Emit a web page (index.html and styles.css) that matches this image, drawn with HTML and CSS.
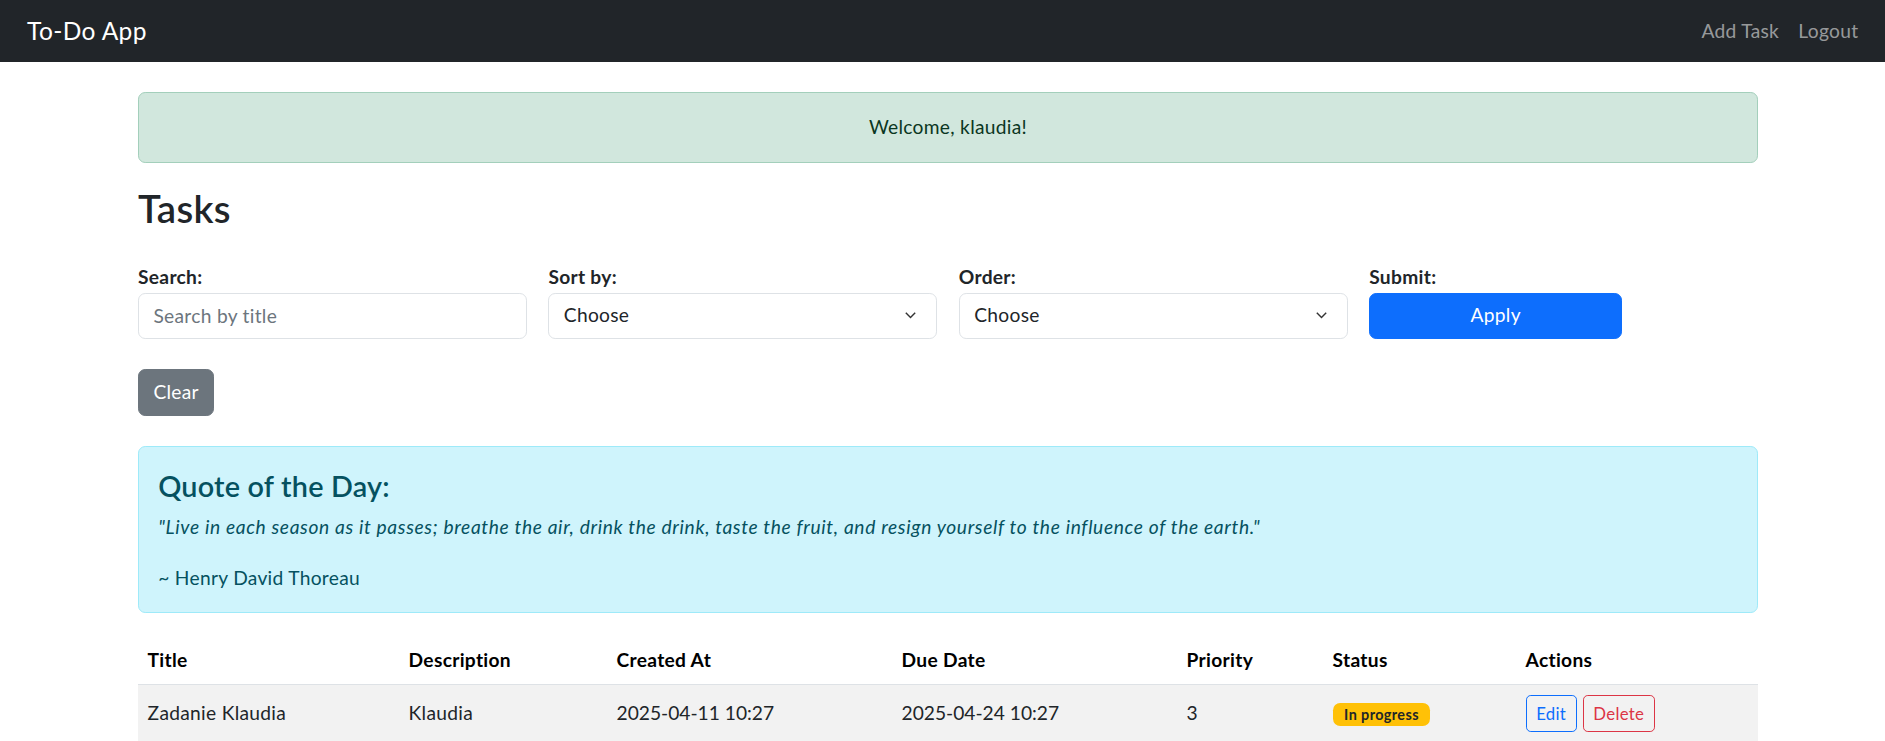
FILE: index.html
```html
<!DOCTYPE html>
<html lang="en">
<head>
<meta charset="utf-8">
<title>To-Do App</title>
<link rel="stylesheet" href="styles.css">
</head>
<body>
<nav class="navbar">
  <a class="brand" href="#">To-Do App</a>
  <div class="nav-links">
    <a class="nav-link" href="#">Add Task</a>
    <a class="nav-link" href="#">Logout</a>
  </div>
</nav>

<main class="container">
  <div class="alert-success">Welcome, klaudia!</div>

  <h2 class="page-title">Tasks</h2>

  <form class="filters">
    <div class="field">
      <label class="label" for="search">Search:</label>
      <input class="control" id="search" type="text" placeholder="Search by title">
    </div>
    <div class="field">
      <label class="label" for="sort">Sort by:</label>
      <div class="select" id="sort"><span>Choose</span><svg class="chev" viewBox="0 0 11 7" width="11" height="7"><path d="M0.8 0.8 5.5 5.6 10.2 0.8" fill="none" stroke="#333" stroke-width="1.4"/></svg></div>
    </div>
    <div class="field">
      <label class="label" for="order">Order:</label>
      <div class="select" id="order"><span>Choose</span><svg class="chev" viewBox="0 0 11 7" width="11" height="7"><path d="M0.8 0.8 5.5 5.6 10.2 0.8" fill="none" stroke="#333" stroke-width="1.4"/></svg></div>
    </div>
    <div class="field">
      <span class="label">Submit:</span>
      <button class="btn-apply" type="button">Apply</button>
    </div>
  </form>

  <button class="btn-clear" type="button">Clear</button>

  <div class="alert-info">
    <h4 class="quote-title">Quote of the Day:</h4>
    <p class="quote-text">"Live in each season as it passes; breathe the air, drink the drink, taste the fruit, and resign yourself to the influence of the earth."</p>
    <p class="quote-author">~ Henry David Thoreau</p>
  </div>

  <table class="tasks">
    <colgroup>
      <col class="c-title"><col class="c-desc"><col class="c-created"><col class="c-due"><col class="c-prio"><col class="c-status"><col class="c-actions">
    </colgroup>
    <thead>
      <tr><th>Title</th><th>Description</th><th>Created At</th><th>Due Date</th><th>Priority</th><th>Status</th><th>Actions</th></tr>
    </thead>
    <tbody>
      <tr>
        <td>Zadanie Klaudia</td>
        <td>Klaudia</td>
        <td class="num">2025-04-11 10:27</td>
        <td class="num">2025-04-24 10:27</td>
        <td class="num">3</td>
        <td><span class="badge">In progress</span></td>
        <td><button class="btn-sm btn-edit" type="button">Edit</button><button class="btn-sm btn-delete" type="button">Delete</button></td>
      </tr>
      <tr>
        <td>&nbsp;</td><td></td><td></td><td></td><td></td><td></td><td></td>
      </tr>
    </tbody>
  </table>
</main>
</body>
</html>
```

FILE: styles.css
```css
* { box-sizing: border-box; }

html, body { margin: 0; padding: 0; }

body {
  font-family: Lato, "Open Sans", sans-serif;
  font-size: 19.2px;
  line-height: 1.5;
  letter-spacing: 0.3px;
  color: #212529;
  background: #fff;
  overflow: hidden;
}

a { text-decoration: none; }

.navbar {
  height: 62px;
  background: #212529;
  display: flex;
  align-items: center;
  justify-content: space-between;
  padding: 0 17px 0 27px;
}

.brand {
  color: #fff;
  font-size: 24.5px;
  line-height: 1.5;
  letter-spacing: 0.4px;
}

.nav-links { display: flex; }

.nav-link {
  color: rgba(255, 255, 255, 0.55);
  padding: 0 9.6px;
}

.container {
  width: 1620px;
  margin: 0 127px 0 138px;
  padding-top: 30px;
}

.alert-success {
  background: #d1e7dd;
  border: 1px solid #a3cfbb;
  color: #0a3622;
  border-radius: 7.2px;
  padding: 20px;
  text-align: center;
  height: 71px;
  line-height: 28.8px;
}

.page-title {
  font-size: 38.4px;
  font-weight: 600;
  line-height: 1.2;
  letter-spacing: 0.3px;
  margin: 22px 0 32px;
}

.filters {
  display: grid;
  grid-template-columns: repeat(4, 1fr);
  column-gap: 21.6px;
}

.field { display: flex; flex-direction: column; }

.label {
  font-weight: 700;
  line-height: 28.8px;
  height: 29.5px;
}

.control, .select {
  height: 46px;
  border: 1px solid #dee2e6;
  border-radius: 7.2px;
  padding: 0 14.4px;
  font: inherit;
  letter-spacing: inherit;
  color: #212529;
  background: #fff;
}

.control::placeholder { color: #6c757d; opacity: 1; }

.select {
  display: flex;
  align-items: center;
  justify-content: space-between;
  padding-right: 20px;
}

.chev { display: block; }

.btn-apply {
  width: 253px;
  height: 46px;
  background: #0d6efd;
  border: 1px solid #0d6efd;
  border-radius: 7.2px;
  color: #fff;
  font: inherit;
  letter-spacing: inherit;
  padding: 0;
}

.btn-clear {
  display: block;
  margin-top: 30.5px;
  height: 47px;
  padding: 0 14.4px;
  background: #6c757d;
  border: 1px solid #6c757d;
  border-radius: 7.2px;
  color: #fff;
  font: inherit;
  letter-spacing: inherit;
}

.alert-info {
  margin-top: 30px;
  background: #cff4fc;
  border: 1px solid #9eeaf9;
  color: #055160;
  border-radius: 7.2px;
  padding: 21.6px 19.2px 19.6px;
  height: 167px;
}

.quote-title {
  margin: 0 0 10px;
  font-size: 28.8px;
  font-weight: 600;
  line-height: 1.2;
  letter-spacing: 0.2px;
}

.quote-text {
  margin: 0 0 22px;
  font-style: italic;
  line-height: 28.8px;
  letter-spacing: 0.65px;
}

.quote-author {
  margin: 0;
  line-height: 28.8px;
}

.tasks {
  margin-top: 23px;
  width: 100%;
  border-collapse: collapse;
  table-layout: fixed;
}

.c-title { width: 261px; }
.c-desc { width: 208px; }
.c-created { width: 285px; }
.c-due { width: 285px; }
.c-prio { width: 146px; }
.c-status { width: 193px; }
.c-actions { width: 242px; }

.tasks th, .tasks td {
  text-align: left;
  padding: 9.6px;
  border-bottom: 1px solid #dee2e6;
  line-height: 28.8px;
  vertical-align: middle;
}

.tasks th { font-weight: 700; color: #000; }

.tasks td.num { letter-spacing: 0; }

.tasks tbody tr:nth-child(odd) td { background: #f2f2f2; }

.tasks td { height: 56px; }

.badge {
  display: inline-block;
  background: #ffc107;
  color: #212529;
  font-size: 14.4px;
  font-weight: 700;
  line-height: 1;
  letter-spacing: 0.4px;
  padding: 4.3px 11.5px;
  border-radius: 7.2px;
}

.btn-sm {
  font: inherit;
  font-size: 16.8px;
  line-height: 1.5;
  letter-spacing: inherit;
  height: 37px;
  padding: 0 9.6px;
  border-radius: 4.8px;
  background: transparent;
  vertical-align: middle;
}

.btn-edit { border: 1px solid #0d6efd; color: #0d6efd; margin-right: 6px; }
.btn-delete { border: 1px solid #dc3545; color: #dc3545; }
```
